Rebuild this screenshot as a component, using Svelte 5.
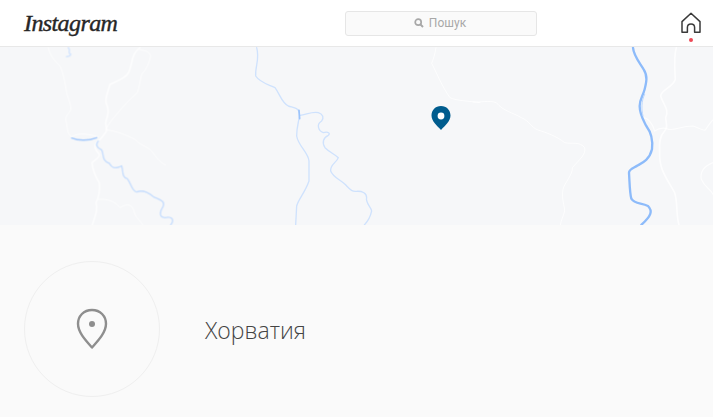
<script lang="ts">
	// traced in zoomed-crop coordinates (3x), one group per crop
	const mapParts = [
		{
			x: 0,
			roads: [
				{ w: 3, d: 'M145,5 C150,30 165,45 180,60 C190,80 195,110 200,140 C205,160 215,180 212,192 C205,205 195,210 198,225 C203,240 200,265 215,272 C240,258 265,265 295,272' },
				{ w: 5, d: 'M420,5 C405,15 398,30 395,50 C390,70 388,85 370,95 C355,105 340,110 330,115 C325,135 315,155 318,170 C328,190 325,205 318,225 C313,240 325,245 318,258 C310,270 302,280 290,290' },
				{ w: 3, d: 'M420,12 C435,12 450,18 452,30 C448,50 440,70 425,85 C420,105 418,125 412,140 C390,160 370,180 350,205 C335,222 325,235 318,250' },
				{ w: 3, d: 'M322,252 C350,255 380,268 405,280 C420,298 440,300 455,315 C470,335 480,350 497,357' },
				{ w: 4.5, d: 'M290,290 C280,300 285,310 298,325 C300,335 285,340 276,350 C278,370 285,390 298,410 C300,430 298,450 288,470 C295,490 285,510 276,540' },
				{ w: 3, d: 'M296,460 C320,458 345,465 360,485 C375,475 395,470 402,495 C405,515 420,520 430,540' }
			],
			rivers: [
				{ w: 4.5, c: '#a3c8fb', d: 'M215,276 C235,285 265,285 290,275' },
				{ w: 4, c: '#c6ddfd', d: 'M295,285 C285,295 290,305 305,312 C312,325 305,345 328,352 C340,372 350,365 365,360 C370,375 365,395 382,398 C395,415 395,435 410,438 C425,432 440,435 460,452 C480,462 495,465 490,480 C480,495 475,515 495,515 C515,510 525,520 512,537' },
				{ w: 5, c: '#d6e6fd', d: 'M205,5 C215,18 200,18 212,25 C210,32 205,30 200,32' }
			]
		},
		{
			x: 240,
			roads: [{ w: 3, d: 'M588,5 C585,25 580,40 575,52 C590,80 605,120 630,155 C650,165 690,165 720,170' }],
			rivers: [
				{ w: 4, c: '#cfe2fd', d: 'M50,5 C60,40 45,60 47,90 C60,110 85,115 105,125 C120,145 125,170 145,180 C160,185 175,185 178,200 C180,220 170,235 170,270 C175,300 205,320 207,345 L207,405 C195,440 175,460 170,480 L167,537' },
				{ w: 4, c: '#cfe2fd', d: 'M180,208 C200,205 220,195 235,200 C250,205 252,215 245,225 C228,235 235,255 250,260 C265,256 272,262 265,268 C250,275 245,290 255,305 C270,320 285,325 295,335 C290,350 270,355 272,375 C280,395 300,400 315,415 C330,430 335,438 350,436 C365,435 380,440 380,455 C375,470 395,485 395,495 C392,510 385,525 373,537' },
				{ w: 5, c: '#9cc4fb', d: 'M177,193 L179,218' }
			]
		},
		{
			x: 473,
			roads: [
				{ w: 5, d: 'M610,5 C602,30 605,60 607,100 C600,125 565,130 563,150 C570,175 590,190 578,215 C580,235 585,245 575,255 C560,270 558,290 560,320 C558,370 580,395 605,440 C615,470 608,500 618,537' },
				{ w: 3.5, d: 'M510,215 C525,215 540,235 545,255 C555,248 570,245 582,248 C600,258 620,240 660,240 C675,245 690,255 697,252 C705,240 715,225 720,222' },
				{ w: 3.5, d: 'M720,350 C695,360 680,375 685,400 C695,425 715,430 720,445' },
				{ w: 3, d: 'M0,168 C20,170 50,162 70,170 C90,195 120,200 145,215 C170,225 175,245 195,252 C220,260 250,270 275,290 C295,295 320,285 335,305 C340,325 320,340 298,365 C300,385 275,410 270,430 C265,460 275,480 275,495 C270,515 265,520 262,537' }
			],
			rivers: [
				{ w: 7, c: '#8dbbfa', d: 'M480,5 C482,30 500,50 512,70 C525,90 520,110 515,130 C510,150 500,160 500,180 C500,205 510,220 520,240 C535,260 540,285 537,310 C530,340 510,350 495,358 C480,367 468,370 468,380 C470,410 470,440 475,458 C485,475 505,470 525,480 C540,495 535,510 505,537' },
				{ w: 3, c: '#bcd7fc', d: 'M515,145 C505,165 505,190 510,210' }
			]
		}
	];
</script>

<div class="page">
	<header>
		<span class="logo">Instagram</span>
		<div class="search">
			<svg width="10" height="10" viewBox="0 0 10 10" aria-hidden="true">
				<circle cx="4.2" cy="4.2" r="3" fill="none" stroke="#a8a8a8" stroke-width="1.7" />
				<path d="M6.4 6.4 L9 9" stroke="#a8a8a8" stroke-width="2" />
			</svg>
			<span>Пошук</span>
		</div>
		<div class="home">
			<svg width="22" height="22" viewBox="0 0 22 22" aria-hidden="true">
				<path
					d="M2 20.3 V9.6 L11 1.3 L20 9.6 V20.3 H14.6 V15.5 C14.6 13.4 13.2 12 11 12 C8.8 12 7.4 13.4 7.4 15.5 V20.3 Z"
					fill="none"
					stroke="#3a3a3a"
					stroke-width="1.5"
					stroke-linejoin="round"
				/>
			</svg>
			<span class="dot"></span>
		</div>
	</header>

	<svg class="map" width="713" height="178" viewBox="0 0 713 178">
		<g class="lines">
			{#each mapParts as part}
				<g transform="translate({part.x},-1) scale(0.3333)" fill="none" stroke-linecap="round">
					{#each part.roads as r}
						<path d={r.d} stroke="#fff" stroke-opacity="0.75" stroke-width={r.w} />
					{/each}
					{#each part.rivers as r}
						<path d={r.d} stroke={r.c} stroke-width={r.w} />
					{/each}
				</g>
			{/each}
		</g>
		<path
			d="M441 59 C435.4 59 431.5 63.2 431.5 68.6 C431.5 74.2 437 79 441 83 C445 79 450.5 74.2 450.5 68.6 C450.5 63.2 446.6 59 441 59 Z"
			fill="#005c8e"
		/>
		<circle cx="441" cy="69" r="3.4" fill="#fff" />
	</svg>

	<section class="place">
		<div class="circle">
			<svg width="34" height="42" viewBox="0 0 34 42" aria-hidden="true">
				<path
					d="M17 2 C8.7 2 3 8 3 15.8 C3 24.5 11 32.8 17 39.5 C23 32.8 31 24.5 31 15.8 C31 8 25.3 2 17 2 Z"
					fill="none"
					stroke="#8e8e8e"
					stroke-width="2.4"
					stroke-linejoin="round"
				/>
				<circle cx="17" cy="16" r="3" fill="#8e8e8e" />
			</svg>
		</div>
		<h1>Хорватия</h1>
	</section>
</div>

<style>
	:global(body) {
		background: #fafafa;
	}

	.page {
		font-family: 'Open Sans', 'Liberation Sans', sans-serif;
		color: #262626;
	}

	header {
		display: grid;
		grid-template-columns: 321px 192px 1fr;
		align-items: center;
		height: 46px;
		padding: 0 11px 0 24px;
		background: #fff;
		border-bottom: 1px solid #e8e8e8;
	}

	.logo {
		font-family: 'Liberation Serif', serif;
		font-style: italic;
		font-size: 24px;
		line-height: 1;
		letter-spacing: -0.6px;
		-webkit-text-stroke: 0.4px #262626;
	}

	.search {
		display: flex;
		align-items: center;
		justify-content: center;
		gap: 5px;
		height: 25px;
		box-sizing: border-box;
		padding-right: 2px;
		background: #fafafa;
		border: 1px solid #e6e6e6;
		border-radius: 3px;
		color: #a8a8a8;
		font-family: Roboto, sans-serif;
		font-size: 12px;
	}

	.home {
		position: relative;
		justify-self: end;
		height: 22px;
	}

	.home svg {
		display: block;
	}

	.dot {
		position: absolute;
		left: 9px;
		top: 26px;
		width: 4px;
		height: 4px;
		border-radius: 50%;
		background: #ed4956;
	}

	.map {
		display: block;
		background: #f6f7f9;
	}

	.lines {
		filter: blur(0.3px);
	}

	.place {
		display: flex;
		align-items: center;
		gap: 45px;
		padding: 36px 24px 20px;
	}

	.circle {
		display: flex;
		align-items: center;
		justify-content: center;
		width: 136px;
		height: 136px;
		box-sizing: border-box;
		border: 1px solid #efefef;
		border-radius: 50%;
	}

	h1 {
		margin: 2px 0 0;
		font-size: 23px;
		font-weight: 300;
		line-height: 32px;
		color: #444;
	}
</style>
